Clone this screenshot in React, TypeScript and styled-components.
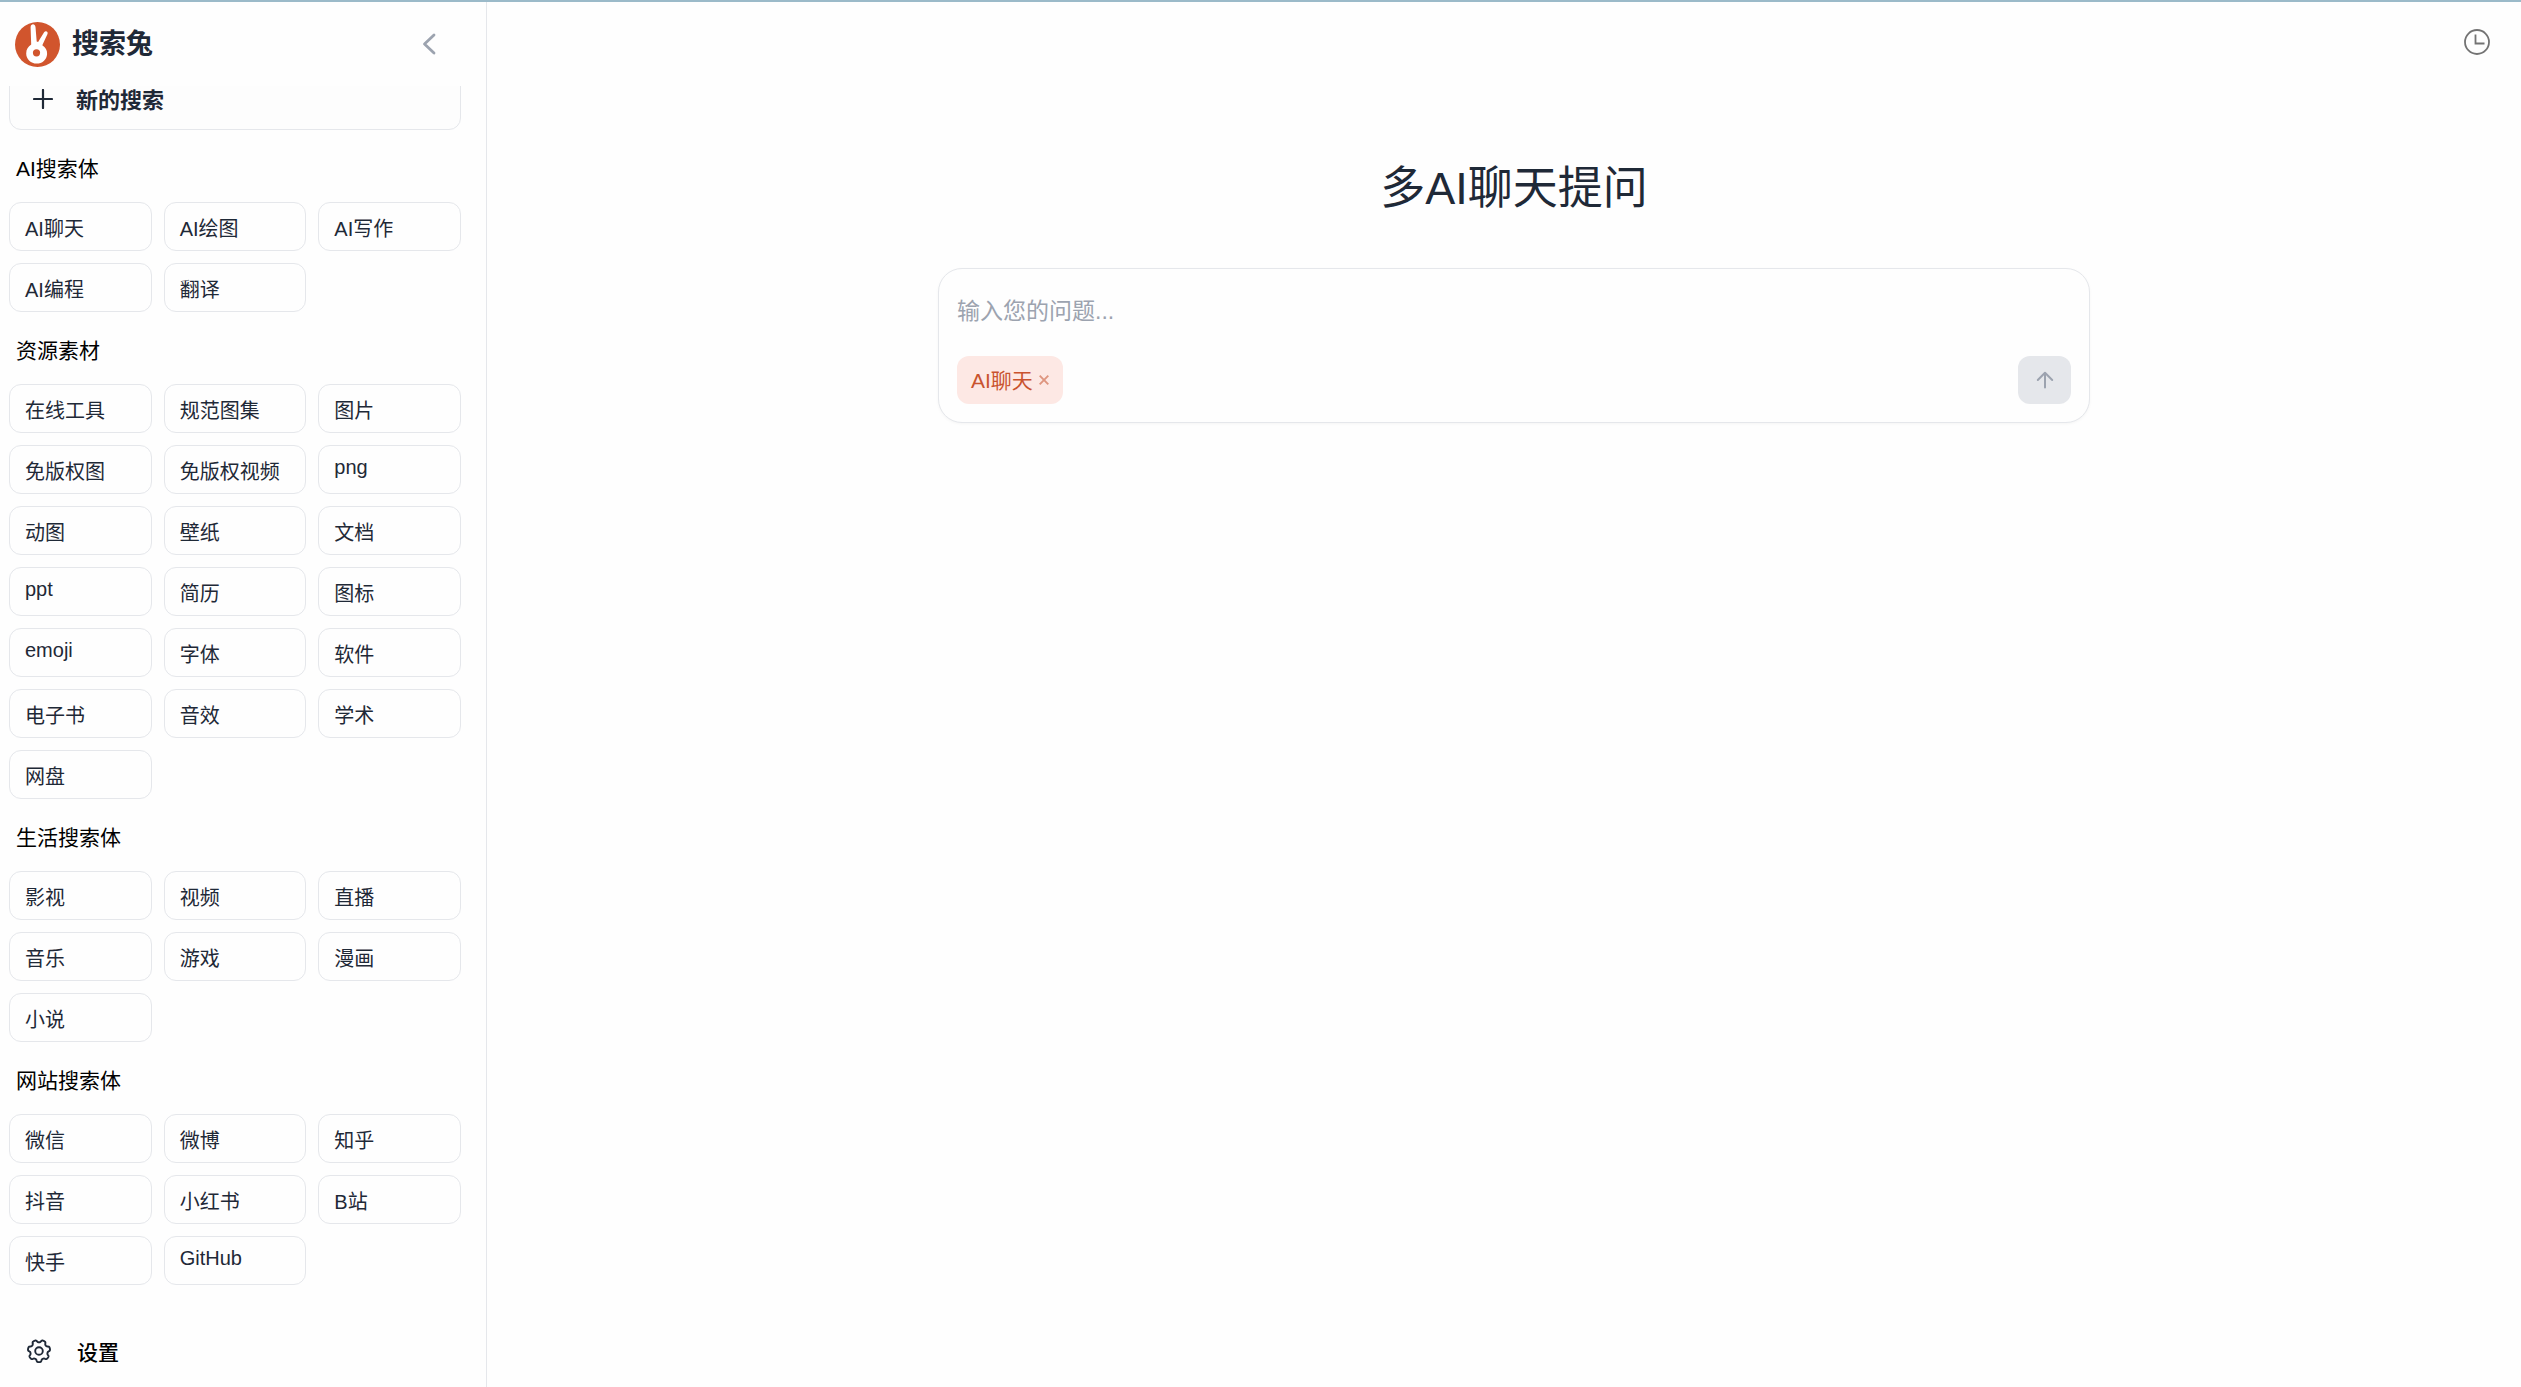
import React from "react";
import styled, { createGlobalStyle } from "styled-components";

const ink = "#1f2937";
const line = "#e5e7eb";
const muted = "#9ca3af";
const brand = "#d1552d";

const GlobalStyle = createGlobalStyle`
  *, *::before, *::after { box-sizing: border-box; }
  body {
    margin: 0;
    background: #fefefe;
    color: ${ink};
    font-family: "Liberation Sans", "Noto Sans CJK SC", sans-serif;
  }
  button, textarea { font: inherit; color: inherit; }
  button { cursor: pointer; }
`;

const Page = styled.div`
  display: flex;
  height: 100vh;
  border-top: 2px solid #9bbac9;
`;

const Sidebar = styled.aside`
  display: flex;
  flex-direction: column;
  flex: 0 0 487px;
  border-right: 1px solid ${line};
`;

const Brand = styled.header`
  display: flex;
  align-items: center;
  flex: 0 0 84px;
  gap: 12px;
  padding: 0 41px 0 15px;
`;

const BrandName = styled.strong`
  flex: 1;
  font-size: 27px;
  line-height: 40px;
`;

const IconButton = styled.button`
  display: flex;
  align-items: center;
  justify-content: center;
  width: 32px;
  height: 32px;
  padding: 0;
  border: 0;
  background: none;
`;

const ScrollArea = styled.nav`
  flex: 1;
  min-height: 0;
  overflow: hidden;
  padding: 0 25px 0 9px;
`;

/* CJK glyphs sit low in their line box; the bottom padding centres them against the icon. */
const Label = styled.span`
  padding-bottom: 3px;
`;

const NewSearch = styled.button`
  display: flex;
  align-items: center;
  gap: 23px;
  width: 100%;
  height: 62px;
  margin-top: -18px;
  padding: 0 23px;
  border: 1px solid ${line};
  border-radius: 12px;
  background: #fdfdfd;
  font-size: 22px;
  font-weight: 700;
`;

const GroupTitle = styled.h2`
  margin: 0;
  padding: 23px 7px 17px;
  color: #000;
  font-size: 21px;
  font-weight: 400;
  line-height: 32px;
`;

const ItemGrid = styled.div`
  display: grid;
  grid-template-columns: repeat(3, 1fr);
  gap: 12px;
`;

const Item = styled.button`
  display: flex;
  align-items: flex-start;
  min-height: 49px;
  padding: 10px 15px 8px;
  border: 1px solid ${line};
  border-radius: 12px;
  background: #fefefe;
  font-size: 20px;
  font-weight: 400;
  line-height: normal;
  white-space: nowrap;
`;

const Footer = styled.footer`
  display: flex;
  flex: 0 0 72px;
  padding: 0 26px;
`;

const SettingsButton = styled.button`
  display: flex;
  align-items: center;
  gap: 25px;
  padding: 0;
  border: 0;
  background: none;
  color: #000;
  font-size: 21px;
  font-weight: 500;
`;

const Main = styled.main`
  display: flex;
  flex: 1;
  flex-direction: column;
  min-width: 0;
`;

const TopBar = styled.div`
  display: flex;
  justify-content: flex-end;
  padding: 24px 28px;
`;

const Center = styled.section`
  display: flex;
  flex-direction: column;
  align-items: center;
  gap: 44px;
  padding: 72px 0 0 20px;
`;

const Heading = styled.h1`
  margin: 0;
  font-size: 45px;
  font-weight: 400;
  line-height: 70px;
`;

const Composer = styled.form`
  display: flex;
  flex-direction: column;
  gap: 12px;
  width: 100%;
  max-width: 1152px;
  padding: 17px 18px 18px;
  border: 1px solid ${line};
  border-radius: 24px;
  background: #fefefe;
  box-shadow: 0 1px 3px rgba(0, 0, 0, 0.04);
`;

const Question = styled.textarea`
  display: block;
  width: 100%;
  height: 58px;
  padding: 9px 0 0;
  border: 0;
  outline: 0;
  resize: none;
  background: transparent;
  font-size: 23px;
  line-height: 32px;
  &::placeholder { color: ${muted}; }
`;

const ComposerBar = styled.div`
  display: flex;
  align-items: center;
  justify-content: space-between;
`;

const Tag = styled.button`
  display: flex;
  align-items: center;
  gap: 6px;
  height: 48px;
  padding: 0 14px;
  border: 0;
  border-radius: 12px;
  background: #fde8e4;
  color: #c9532e;
  font-size: 21px;
`;

const Send = styled.button`
  display: flex;
  align-items: center;
  justify-content: center;
  width: 53px;
  height: 48px;
  padding: 0;
  border: 0;
  border-radius: 12px;
  background: ${line};
`;

const groups = [
  { title: "AI搜索体", items: ["AI聊天", "AI绘图", "AI写作", "AI编程", "翻译"] },
  {
    title: "资源素材",
    items: [
      "在线工具", "规范图集", "图片", "免版权图", "免版权视频", "png", "动图", "壁纸", "文档",
      "ppt", "简历", "图标", "emoji", "字体", "软件", "电子书", "音效", "学术", "网盘",
    ],
  },
  { title: "生活搜索体", items: ["影视", "视频", "直播", "音乐", "游戏", "漫画", "小说"] },
  { title: "网站搜索体", items: ["微信", "微博", "知乎", "抖音", "小红书", "B站", "快手", "GitHub"] },
];

const Logo = () => (
  <svg width="45" height="45" viewBox="0 0 45 45" aria-hidden="true">
    <circle cx="22.5" cy="22.5" r="22.5" fill={brand} />
    <path d="M15.600 5.200C15.800 1.600 20 1.300 20.500 5l1.200 14.500 1.400.4 6-9.600c1.500-2.200 4.300-.8 3.400 1.800l-5.200 11.200c3.200 2 5 4.900 4.800 8.600-.3 5.800-5 9.700-10.500 9.700S11.200 37.500 11.200 31.500c0-4 1.900-7 5-8.900z" fill="#fff" />
    <circle cx="21.5" cy="30.800" r="3.600" fill={brand} />
  </svg>
);

const ChevronIcon = () => (
  <svg width="14" height="22" viewBox="0 0 14 22" fill="none" stroke={muted} strokeWidth="2.8" strokeLinecap="round" strokeLinejoin="round" aria-hidden="true">
    <path d="M12 2 2.500 11 12 20" />
  </svg>
);

const PlusIcon = () => (
  <svg width="20" height="20" viewBox="0 0 20 20" stroke={ink} strokeWidth="2.2" strokeLinecap="round" aria-hidden="true">
    <path d="M10 1v18M1 10h18" />
  </svg>
);

// Outline of a cog with seven rounded teeth, one of them pointing straight down.
const cogPath = (() => {
  const points: string[] = [];
  for (let step = 0; step < 210; step += 1) {
    const angle = (step / 210) * Math.PI * 2;
    const radius = 9.9 + 1.25 * Math.tanh(2 * Math.cos(7 * angle) + 0.3);
    const x = 13 + radius * Math.sin(angle);
    const y = 13 + radius * Math.cos(angle);
    points.push(`${x.toFixed(2)} ${y.toFixed(2)}`);
  }
  return `M${points.join("L")}Z`;
})();

const GearIcon = () => (
  <svg width="26" height="26" viewBox="0 0 26 26" fill="none" stroke={ink} strokeWidth="1.9" strokeLinejoin="round" aria-hidden="true">
    <path d={cogPath} />
    <circle cx="13" cy="13" r="3.8" />
  </svg>
);

const ClockIcon = () => (
  <svg width="26" height="26" viewBox="0 0 26 26" fill="none" stroke="#737373" strokeWidth="1.8" aria-hidden="true">
    <circle cx="13" cy="13" r="12" />
    <path d="M11.500 5.500v9h9" />
  </svg>
);

const ArrowIcon = () => (
  <svg width="18" height="18" viewBox="0 0 18 18" fill="none" stroke={muted} strokeWidth="2" strokeLinecap="round" strokeLinejoin="round" aria-hidden="true">
    <path d="M9 16.500V2M1.800 9 9 1.800 16.200 9" />
  </svg>
);

const CloseIcon = () => (
  <svg width="10" height="10" viewBox="0 0 10 10" stroke="#de957f" strokeWidth="1.9" aria-hidden="true">
    <path d="M.7.7l8.600 8.600M9.300.7.7 9.300" />
  </svg>
);

export default function App() {
  return (
    <>
      <GlobalStyle />
      <Page>
        <Sidebar>
          <Brand>
            <Logo />
            <BrandName>搜索兔</BrandName>
            <IconButton type="button" aria-label="收起侧栏">
              <ChevronIcon />
            </IconButton>
          </Brand>
          <ScrollArea>
            <NewSearch type="button">
              <PlusIcon />
              <Label>新的搜索</Label>
            </NewSearch>
            {groups.map((group) => (
              <section key={group.title}>
                <GroupTitle>{group.title}</GroupTitle>
                <ItemGrid>
                  {group.items.map((item) => (
                    <Item type="button" key={item}>{item}</Item>
                  ))}
                </ItemGrid>
              </section>
            ))}
          </ScrollArea>
          <Footer>
            <SettingsButton type="button">
              <GearIcon />
              设置
            </SettingsButton>
          </Footer>
        </Sidebar>
        <Main>
          <TopBar>
            <IconButton type="button" aria-label="历史记录">
              <ClockIcon />
            </IconButton>
          </TopBar>
          <Center>
            <Heading>多AI聊天提问</Heading>
            <Composer onSubmit={(event) => event.preventDefault()}>
              <Question aria-label="问题" placeholder="输入您的问题..." rows={1} />
              <ComposerBar>
                <Tag type="button">
                  <Label>AI聊天</Label>
                  <CloseIcon />
                </Tag>
                <Send type="submit" aria-label="发送">
                  <ArrowIcon />
                </Send>
              </ComposerBar>
            </Composer>
          </Center>
        </Main>
      </Page>
    </>
  );
}
